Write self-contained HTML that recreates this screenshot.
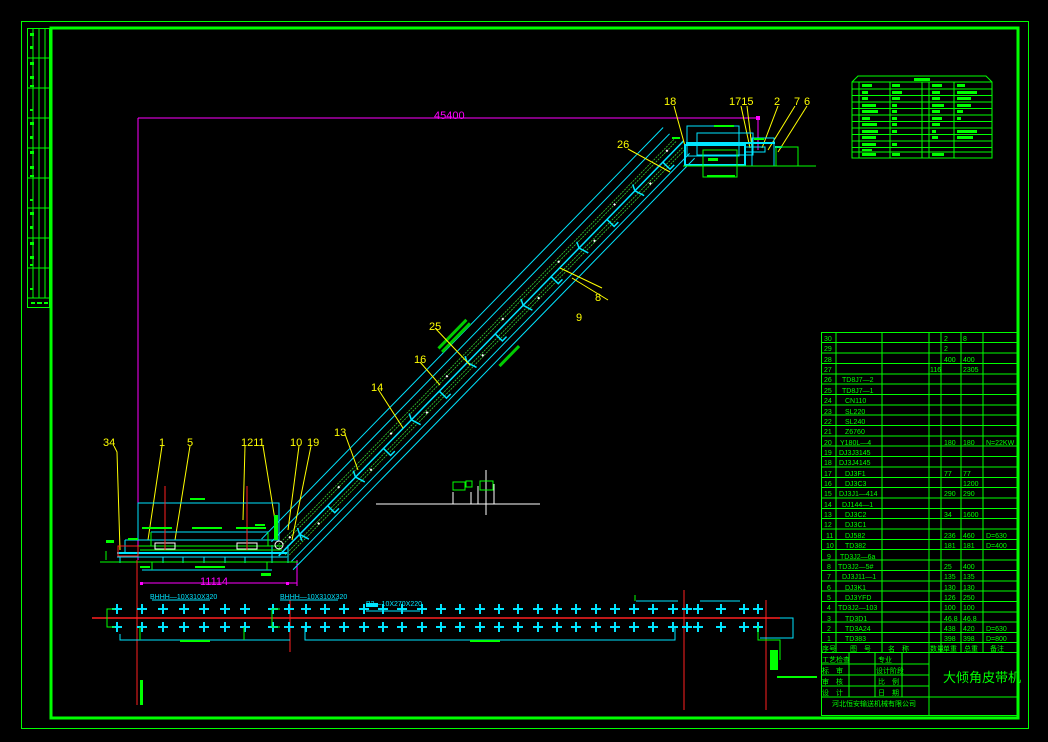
<!DOCTYPE html>
<html><head><meta charset="utf-8"><style>
html,body{margin:0;padding:0;background:#000;}
svg{display:block}
text{font-family:"Liberation Sans","Noto Sans CJK SC",sans-serif}
</style></head><body>
<svg width="1048" height="742" viewBox="0 0 1048 742" xmlns="http://www.w3.org/2000/svg">
<rect width="1048" height="742" fill="#000"/>
<rect x="21.5" y="21.5" width="1007" height="707" fill="none" stroke="#00ff00" stroke-width="1"/>
<rect x="51" y="28" width="967" height="690" fill="none" stroke="#00ff00" stroke-width="3"/>
<g stroke="#00ff00" fill="none" stroke-width="1">
<rect x="27.5" y="28.5" width="22" height="279"/>
<line x1="33" y1="28" x2="33" y2="298"/><line x1="39" y1="28" x2="39" y2="298"/><line x1="45" y1="28" x2="45" y2="298"/>
<line x1="27" y1="58" x2="50" y2="58"/><line x1="27" y1="88" x2="50" y2="88"/><line x1="27" y1="118" x2="50" y2="118"/><line x1="27" y1="148" x2="50" y2="148"/><line x1="27" y1="178" x2="50" y2="178"/><line x1="27" y1="208" x2="50" y2="208"/><line x1="27" y1="238" x2="50" y2="238"/><line x1="27" y1="268" x2="50" y2="268"/><line x1="27" y1="298" x2="50" y2="298"/>
</g>
<g fill="#00ff00">
<rect x="30" y="33" width="4" height="3"/><rect x="30" y="46" width="3" height="3"/><rect x="30" y="62" width="4" height="3"/><rect x="30" y="76" width="4" height="3"/><rect x="30" y="85" width="4" height="2"/><rect x="30" y="109" width="3" height="2"/><rect x="30" y="122" width="4" height="3"/><rect x="30" y="136" width="3" height="3"/><rect x="30" y="151" width="4" height="3"/><rect x="30" y="166" width="4" height="3"/><rect x="30" y="175" width="4" height="2"/><rect x="30" y="199" width="3" height="2"/><rect x="30" y="212" width="4" height="3"/><rect x="30" y="226" width="3" height="3"/><rect x="30" y="242" width="4" height="3"/><rect x="30" y="256" width="4" height="3"/><rect x="30" y="264" width="3" height="2"/><rect x="30" y="288" width="3" height="2"/><rect x="31" y="302" width="4" height="2"/><rect x="37" y="302" width="5" height="2"/><rect x="44" y="302" width="4" height="2"/>
</g>

<g stroke="#ff00ff" stroke-width="1" fill="none">
<line x1="138" y1="118" x2="758" y2="118"/>
<line x1="138" y1="118" x2="138" y2="560"/>
<line x1="758" y1="118" x2="758" y2="150"/>
<line x1="142" y1="583" x2="297" y2="583"/>
<line x1="297" y1="560" x2="297" y2="586"/>
</g>
<rect x="756" y="116" width="4" height="4" fill="#ff00ff"/>
<rect x="140" y="582" width="3" height="3" fill="#ff00ff"/><rect x="286" y="582" width="3" height="3" fill="#ff00ff"/>
<text x="434" y="119" fill="#ff00ff" font-size="11">45400</text>
<text x="200" y="585" fill="#ff00ff" font-size="11">11114</text>

<g transform="translate(283,560) rotate(-45.7)">
<g stroke="#00e5ff" stroke-width="1" fill="none">
<line x1="0" y1="-30" x2="575" y2="-30"/>
<line x1="5" y1="-21" x2="575" y2="-21"/>
<line x1="5" y1="7" x2="575" y2="7"/>
<line x1="0" y1="14" x2="575" y2="14"/>
<line x1="0" y1="-6" x2="580" y2="-6" stroke-width="1.5"/>
</g>
<g stroke="#33cc33" stroke-width="0.8" fill="none" stroke-dasharray="2,1">
<line x1="5" y1="-14" x2="575" y2="-14"/><line x1="5" y1="-11" x2="575" y2="-11"/><line x1="5" y1="-2" x2="575" y2="-2"/><line x1="5" y1="1" x2="575" y2="1"/>
</g>
<g stroke="#00e5ff" stroke-width="1.5" fill="none">
<path d="M30,-6 l3,-6 M30,-6 l-3,6 M30,-6 l3,10"/>
<path d="M70,-6 l0,10 l6,0"/><path d="M110,-6 l3,-6 M110,-6 l3,10"/><path d="M150,-6 l0,10 l6,0"/><path d="M190,-6 l3,-6 M190,-6 l3,10"/><path d="M230,-6 l0,10 l6,0"/><path d="M270,-6 l3,-6 M270,-6 l3,10"/><path d="M310,-6 l0,10 l6,0"/><path d="M350,-6 l3,-6 M350,-6 l3,10"/><path d="M390,-6 l0,10 l6,0"/><path d="M430,-6 l3,-6 M430,-6 l3,10"/><path d="M470,-6 l0,10 l6,0"/><path d="M510,-6 l3,-6 M510,-6 l3,10"/><path d="M550,-6 l0,10 l6,0"/>
</g>
<g fill="#fff">
<rect x="20" y="-12" width="2" height="2"/><rect x="50" y="-1" width="2" height="2"/><rect x="90" y="-12" width="2" height="2"/><rect x="125" y="-1" width="2" height="2"/><rect x="165" y="-12" width="2" height="2"/><rect x="205" y="-1" width="2" height="2"/><rect x="245" y="-12" width="2" height="2"/><rect x="285" y="-1" width="2" height="2"/><rect x="325" y="-12" width="2" height="2"/><rect x="365" y="-1" width="2" height="2"/><rect x="405" y="-12" width="2" height="2"/><rect x="445" y="-1" width="2" height="2"/><rect x="485" y="-12" width="2" height="2"/><rect x="525" y="-1" width="2" height="2"/><rect x="560" y="-12" width="2" height="2"/>
</g>
<g fill="#00cc00"><rect x="260" y="-38" width="40" height="3"/><rect x="260" y="-33" width="40" height="3"/><rect x="290" y="18" width="28" height="3"/></g>
</g>

<g stroke="#ffff00" stroke-width="1" fill="none">
<path d="M114,446 L117,452 L120,550"/>
<path d="M162,446 L148,540"/><path d="M190,446 L175,540"/>
<path d="M245,446 L243,520"/><path d="M263,446 L275,520"/>
<path d="M299,446 L288,530"/><path d="M311,446 L292,540"/>
<path d="M345,434 L358,470"/><path d="M378,389 L403,428"/><path d="M420,362 L440,385"/><path d="M435,328 L470,365"/>
<path d="M602,288 L560,268"/><path d="M608,300 L572,278"/>
<path d="M674,106 L685,146"/><path d="M741,106 L750,148"/><path d="M747,106 L752,148"/><path d="M778,106 L762,148"/><path d="M795,106 L768,150"/><path d="M807,106 L778,152"/>
<path d="M628,149 L670,172"/>
</g>
<g fill="#ffff00" font-size="11">
<text x="103" y="446">34</text><text x="159" y="446">1</text><text x="187" y="446">5</text><text x="241" y="446">1211</text><text x="290" y="446">10</text><text x="307" y="446">19</text>
<text x="334" y="436">13</text><text x="371" y="391">14</text><text x="414" y="363">16</text><text x="429" y="330">25</text>
<text x="595" y="301">8</text><text x="576" y="321">9</text>
<text x="617" y="148">26</text><text x="664" y="105">18</text><text x="729" y="105">1715</text><text x="774" y="105">2</text><text x="794" y="105">7</text><text x="804" y="105">6</text>
</g>

<g stroke="#00e5ff" stroke-width="1" fill="none">
<rect x="138" y="503" width="141" height="37"/>
<line x1="151" y1="532" x2="268" y2="532"/>
<line x1="142" y1="570" x2="272" y2="570"/>
<line x1="117" y1="553" x2="287" y2="553" stroke-width="2"/>
<line x1="117" y1="557" x2="287" y2="557"/>
<line x1="120" y1="557" x2="120" y2="563"/><line x1="163" y1="557" x2="163" y2="563"/><line x1="183" y1="557" x2="183" y2="563"/><line x1="204" y1="557" x2="204" y2="563"/><line x1="225" y1="557" x2="225" y2="563"/><line x1="245" y1="557" x2="245" y2="563"/><line x1="272" y1="545" x2="272" y2="563"/><line x1="288" y1="545" x2="288" y2="563"/>
<line x1="125" y1="540" x2="148" y2="540"/><line x1="125" y1="540" x2="125" y2="552"/>
</g>
<g stroke="#00ff00" stroke-width="1" fill="none">
<line x1="100" y1="562" x2="298" y2="562"/>
<line x1="138" y1="546" x2="282" y2="546"/><line x1="140" y1="550" x2="282" y2="550"/>
<line x1="151" y1="532" x2="151" y2="546"/><line x1="268" y1="532" x2="268" y2="546"/>
<line x1="152" y1="562" x2="152" y2="570"/><line x1="267" y1="562" x2="267" y2="570"/>
<line x1="106" y1="551" x2="106" y2="560"/>
</g>
<g stroke="#fff" fill="none" stroke-width="1"><rect x="155" y="543" width="20" height="6"/><rect x="237" y="543" width="20" height="6"/><circle cx="279" cy="545" r="4"/></g>
<rect x="118" y="546" width="20" height="10" fill="none" stroke="#ff2020"/>
<g stroke="#ff2020" stroke-width="1"><line x1="165" y1="486" x2="165" y2="550"/><line x1="247" y1="486" x2="247" y2="550"/><line x1="137" y1="560" x2="137" y2="705"/><line x1="290" y1="600" x2="290" y2="652"/><line x1="684" y1="590" x2="684" y2="710"/><line x1="766" y1="600" x2="766" y2="710"/></g>
<g fill="#00ff00"><rect x="106" y="540" width="8" height="3"/><rect x="128" y="538" width="10" height="2"/><rect x="190" y="498" width="15" height="2"/><rect x="255" y="524" width="10" height="2"/><rect x="261" y="573" width="10" height="3"/><rect x="142" y="527" width="30" height="2"/><rect x="192" y="527" width="30" height="2"/><rect x="236" y="527" width="30" height="2"/><rect x="140" y="566" width="10" height="2"/><rect x="195" y="566" width="30" height="2"/><rect x="274" y="515" width="4" height="25"/></g>

<g stroke="#fff" stroke-width="1" fill="none">
<line x1="376" y1="504" x2="540" y2="504"/><line x1="486" y1="470" x2="486" y2="515"/>
<line x1="453" y1="492" x2="453" y2="504"/><line x1="471" y1="492" x2="471" y2="504"/><line x1="478" y1="486" x2="478" y2="504"/><line x1="494" y1="484" x2="494" y2="504"/>
</g>
<g stroke="#00ff00" fill="none"><rect x="453" y="482" width="12" height="8"/><rect x="466" y="481" width="6" height="6"/><rect x="480" y="481" width="13" height="9"/></g>

<g stroke="#00e5ff" stroke-width="1" fill="none">
<rect x="687" y="126" width="52" height="30"/>
<rect x="697" y="133" width="56" height="22"/>
<rect x="685" y="145" width="60" height="20" stroke-width="2"/>
<line x1="686" y1="143" x2="775" y2="143" stroke-width="2"/>
<rect x="752" y="138" width="22" height="28"/>
<rect x="745" y="147" width="20" height="5"/>
<line x1="775" y1="147" x2="782" y2="147" stroke-width="2"/>
</g>
<g stroke="#00ff00" stroke-width="1" fill="none">
<line x1="683" y1="166" x2="816" y2="166"/>
<rect x="703" y="150" width="34" height="27"/>
<rect x="776" y="147" width="22" height="19"/>
</g>
<g fill="#00ff00"><rect x="714" y="125" width="20" height="2"/><rect x="754" y="138" width="10" height="2"/><rect x="708" y="158" width="10" height="3"/><rect x="707" y="175" width="28" height="2"/><rect x="672" y="137" width="8" height="2"/></g>

<line x1="92" y1="618" x2="780" y2="618" stroke="#ff2020" stroke-width="1.5"/>
<g stroke="#00e5ff" stroke-width="1" fill="none">
<polyline points="120,634 120,640 290,640"/>
<polyline points="305,626 305,640 675,640 675,626"/>
<line x1="152" y1="600" x2="210" y2="600"/><line x1="280" y1="600" x2="338" y2="600"/><line x1="366" y1="611" x2="420" y2="611"/>
<line x1="636" y1="601" x2="678" y2="601"/><line x1="700" y1="601" x2="740" y2="601"/>
<polyline points="780,618 793,618 793,638 760,638"/>
</g>
<g fill="#00e5ff">
<path d="M116 604h2v10h-2zM112 608h10v2h-10z M141 604h2v10h-2zM137 608h10v2h-10z M162 604h2v10h-2zM158 608h10v2h-10z M183 604h2v10h-2zM179 608h10v2h-10z M203 604h2v10h-2zM199 608h10v2h-10z M224 604h2v10h-2zM220 608h10v2h-10z M244 604h2v10h-2zM240 608h10v2h-10z M272 604h2v10h-2zM268 608h10v2h-10z M288 604h2v10h-2zM284 608h10v2h-10z M305 604h2v10h-2zM301 608h10v2h-10z M324 604h2v10h-2zM320 608h10v2h-10z M343 604h2v10h-2zM339 608h10v2h-10z M363 604h2v10h-2zM359 608h10v2h-10z M382 604h2v10h-2zM378 608h10v2h-10z M401 604h2v10h-2zM397 608h10v2h-10z M421 604h2v10h-2zM417 608h10v2h-10z M440 604h2v10h-2zM436 608h10v2h-10z M459 604h2v10h-2zM455 608h10v2h-10z M479 604h2v10h-2zM475 608h10v2h-10z M498 604h2v10h-2zM494 608h10v2h-10z M517 604h2v10h-2zM513 608h10v2h-10z M537 604h2v10h-2zM533 608h10v2h-10z M556 604h2v10h-2zM552 608h10v2h-10z M575 604h2v10h-2zM571 608h10v2h-10z M595 604h2v10h-2zM591 608h10v2h-10z M614 604h2v10h-2zM610 608h10v2h-10z M633 604h2v10h-2zM629 608h10v2h-10z M652 604h2v10h-2zM648 608h10v2h-10z M672 604h2v10h-2zM668 608h10v2h-10z M686 604h2v10h-2zM682 608h10v2h-10z M697 604h2v10h-2zM693 608h10v2h-10z M720 604h2v10h-2zM716 608h10v2h-10z M743 604h2v10h-2zM739 608h10v2h-10z M757 604h2v10h-2zM753 608h10v2h-10z"/>
<path d="M116 622h2v10h-2zM112 626h10v2h-10z M141 622h2v10h-2zM137 626h10v2h-10z M162 622h2v10h-2zM158 626h10v2h-10z M183 622h2v10h-2zM179 626h10v2h-10z M203 622h2v10h-2zM199 626h10v2h-10z M224 622h2v10h-2zM220 626h10v2h-10z M244 622h2v10h-2zM240 626h10v2h-10z M272 622h2v10h-2zM268 626h10v2h-10z M288 622h2v10h-2zM284 626h10v2h-10z M305 622h2v10h-2zM301 626h10v2h-10z M324 622h2v10h-2zM320 626h10v2h-10z M343 622h2v10h-2zM339 626h10v2h-10z M363 622h2v10h-2zM359 626h10v2h-10z M382 622h2v10h-2zM378 626h10v2h-10z M401 622h2v10h-2zM397 626h10v2h-10z M421 622h2v10h-2zM417 626h10v2h-10z M440 622h2v10h-2zM436 626h10v2h-10z M459 622h2v10h-2zM455 626h10v2h-10z M479 622h2v10h-2zM475 626h10v2h-10z M498 622h2v10h-2zM494 626h10v2h-10z M517 622h2v10h-2zM513 626h10v2h-10z M537 622h2v10h-2zM533 626h10v2h-10z M556 622h2v10h-2zM552 626h10v2h-10z M575 622h2v10h-2zM571 626h10v2h-10z M595 622h2v10h-2zM591 626h10v2h-10z M614 622h2v10h-2zM610 626h10v2h-10z M633 622h2v10h-2zM629 626h10v2h-10z M652 622h2v10h-2zM648 626h10v2h-10z M672 622h2v10h-2zM668 626h10v2h-10z M686 622h2v10h-2zM682 626h10v2h-10z M697 622h2v10h-2zM693 626h10v2h-10z M720 622h2v10h-2zM716 626h10v2h-10z M743 622h2v10h-2zM739 626h10v2h-10z M757 622h2v10h-2zM753 626h10v2h-10z"/>
<rect x="366" y="603" width="12" height="4"/>
</g>
<g stroke="#00ff00" fill="none"><polyline points="115,609 107,609 107,627 115,627"/><polyline points="280,609 272,609 272,627 280,627"/><polyline points="758,626 758,640 780,640 780,660"/><line x1="140" y1="627" x2="140" y2="640"/><line x1="244" y1="627" x2="244" y2="640"/><line x1="635" y1="601" x2="635" y2="595"/></g>
<g fill="#00ff00"><rect x="140" y="680" width="3" height="25"/><rect x="180" y="640" width="30" height="2"/><rect x="470" y="640" width="30" height="2"/><rect x="777" y="676" width="40" height="2"/><rect x="770" y="650" width="8" height="20"/></g>
<g fill="#00e5ff" font-size="7"><text x="150" y="599">BHHH—10X310X320</text><text x="280" y="599">BHHH—10X310X320</text><text x="366" y="606">B2—10X270X220</text></g>

<g stroke="#00ff00" stroke-width="1" fill="none">
<path d="M852,158 V82 L858,76 H986 L992,82 V158 Z"/>
<line x1="852" y1="82" x2="992" y2="82"/>
<line x1="852" y1="89" x2="992" y2="89"/><line x1="852" y1="95.5" x2="992" y2="95.5"/><line x1="852" y1="102" x2="992" y2="102"/><line x1="852" y1="108.5" x2="992" y2="108.5"/><line x1="852" y1="115" x2="992" y2="115"/><line x1="852" y1="121.5" x2="992" y2="121.5"/><line x1="852" y1="128" x2="992" y2="128"/><line x1="852" y1="134.5" x2="992" y2="134.5"/><line x1="852" y1="141" x2="992" y2="141"/><line x1="852" y1="147.5" x2="992" y2="147.5"/><line x1="852" y1="152" x2="992" y2="152"/>
<line x1="859" y1="82" x2="859" y2="158"/><line x1="890" y1="82" x2="890" y2="158"/><line x1="922" y1="82" x2="922" y2="158"/><line x1="929" y1="82" x2="929" y2="158"/><line x1="954" y1="82" x2="954" y2="158"/>
</g>
<g fill="#00ff00">
<rect x="914" y="78" width="16" height="3"/>
<rect x="862" y="84" width="10" height="3"/><rect x="862" y="91" width="6" height="3"/><rect x="862" y="97" width="6" height="3"/><rect x="862" y="104" width="14" height="3"/><rect x="862" y="110" width="16" height="3"/><rect x="862" y="117" width="8" height="3"/><rect x="862" y="123" width="15" height="3"/><rect x="862" y="130" width="16" height="3"/><rect x="862" y="136" width="14" height="3"/><rect x="862" y="143" width="14" height="3"/><rect x="862" y="149" width="10" height="2"/><rect x="862" y="153" width="14" height="3"/>
<rect x="892" y="84" width="8" height="3"/><rect x="892" y="91" width="10" height="3"/><rect x="892" y="97" width="8" height="3"/><rect x="892" y="104" width="5" height="3"/><rect x="892" y="110" width="5" height="3"/><rect x="892" y="117" width="5" height="3"/><rect x="892" y="123" width="5" height="3"/><rect x="892" y="130" width="5" height="3"/><rect x="892" y="143" width="5" height="3"/><rect x="892" y="153" width="8" height="3"/>
<rect x="932" y="84" width="10" height="3"/><rect x="932" y="91" width="8" height="3"/><rect x="932" y="97" width="8" height="3"/><rect x="932" y="104" width="12" height="3"/><rect x="932" y="110" width="8" height="3"/><rect x="932" y="117" width="10" height="3"/><rect x="932" y="123" width="8" height="3"/><rect x="932" y="130" width="4" height="3"/><rect x="932" y="136" width="6" height="3"/><rect x="932" y="153" width="12" height="3"/>
<rect x="957" y="84" width="8" height="3"/><rect x="957" y="91" width="20" height="3"/><rect x="957" y="97" width="14" height="3"/><rect x="957" y="104" width="14" height="3"/><rect x="957" y="110" width="6" height="3"/><rect x="957" y="117" width="4" height="3"/><rect x="957" y="130" width="20" height="3"/><rect x="957" y="136" width="16" height="3"/>
</g>

<g stroke="#00ff00" stroke-width="1" fill="none">
<rect x="821.5" y="332.5" width="196" height="383"/>
<line x1="836" y1="332" x2="836" y2="652"/><line x1="882" y1="332" x2="882" y2="652"/><line x1="929" y1="332" x2="929" y2="715"/><line x1="941" y1="332" x2="941" y2="652"/><line x1="961" y1="332" x2="961" y2="652"/><line x1="983" y1="332" x2="983" y2="652"/>
<path d="M821 342.5h197M821 353h197M821 363.5h197M821 374h197M821 384h197M821 394.5h197M821 405h197M821 415h197M821 425.5h197M821 436h197M821 446h197M821 456.5h197M821 467h197M821 477.5h197M821 487.5h197M821 498h197M821 508.5h197M821 518.5h197M821 529h197M821 539.5h197M821 549.5h197M821 560h197M821 570.5h197M821 581h197M821 591h197M821 601.5h197M821 612h197M821 622h197M821 632.5h197M821 642.5h197M821 652.5h197"/>
<path d="M821 664h108M821 675h108M821 686h108M821 697h197"/>
<line x1="849" y1="652" x2="849" y2="697"/><line x1="875" y1="652" x2="875" y2="697"/><line x1="902" y1="652" x2="902" y2="697"/>
</g>
<g fill="#00ff00" font-size="7">
<text x="824" y="341">30</text><text x="824" y="351">29</text><text x="824" y="362">28</text><text x="824" y="372">27</text><text x="824" y="382">26</text><text x="824" y="393">25</text><text x="824" y="403">24</text><text x="824" y="414">23</text><text x="824" y="424">22</text><text x="824" y="434">21</text><text x="824" y="445">20</text><text x="824" y="455">19</text><text x="824" y="465">18</text><text x="824" y="476">17</text><text x="824" y="486">16</text><text x="824" y="496">15</text><text x="824" y="507">14</text><text x="824" y="517">13</text><text x="824" y="527">12</text><text x="826" y="538">11</text><text x="826" y="548">10</text><text x="827" y="559">9</text><text x="827" y="569">8</text><text x="827" y="579">7</text><text x="827" y="590">6</text><text x="827" y="600">5</text><text x="827" y="610">4</text><text x="827" y="621">3</text><text x="827" y="631">2</text><text x="827" y="641">1</text>
<text x="842" y="382">TD8J7—2</text><text x="842" y="393">TD8J7—1</text><text x="845" y="403">CN110</text><text x="845" y="414">SL220</text><text x="845" y="424">SL240</text><text x="845" y="434">Z6760</text><text x="840" y="445">Y180L—4</text><text x="839" y="455">DJ3J3145</text><text x="839" y="465">DJ3J4145</text><text x="845" y="476">DJ3F1</text><text x="845" y="486">DJ3C3</text><text x="839" y="496">DJ3J1—414</text><text x="842" y="507">DJ144—1</text><text x="845" y="517">DJ3C2</text><text x="845" y="527">DJ3C1</text><text x="845" y="538">DJ582</text><text x="845" y="548">TD382</text><text x="840" y="559">TD3J2—6a</text><text x="838" y="569">TD3J2—5#</text><text x="842" y="579">DJ3J11—1</text><text x="845" y="590">DJ3K1</text><text x="845" y="600">DJ3YFD</text><text x="838" y="610">TD3J2—103</text><text x="845" y="621">TD3D1</text><text x="845" y="631">TD3A24</text><text x="845" y="641">TD383</text>
<text x="944" y="341">2</text><text x="963" y="341">8</text><text x="944" y="351">2</text><text x="944" y="362">400</text><text x="963" y="362">400</text><text x="930" y="372">116</text><text x="963" y="372">2305</text><text x="944" y="445">180</text><text x="963" y="445">180</text><text x="986" y="445">N=22KW</text><text x="944" y="476">77</text><text x="963" y="476">77</text><text x="963" y="486">1200</text><text x="944" y="496">290</text><text x="963" y="496">290</text><text x="944" y="517">34</text><text x="963" y="517">1600</text><text x="944" y="538">236</text><text x="963" y="538">460</text><text x="986" y="538">D=630</text><text x="944" y="548">181</text><text x="963" y="548">181</text><text x="986" y="548">D=400</text><text x="944" y="569">25</text><text x="963" y="569">400</text><text x="944" y="579">135</text><text x="963" y="579">135</text><text x="944" y="590">130</text><text x="963" y="590">130</text><text x="944" y="600">126</text><text x="963" y="600">250</text><text x="944" y="610">100</text><text x="963" y="610">100</text><text x="944" y="621">46.8</text><text x="963" y="621">46.8</text><text x="944" y="631">438</text><text x="963" y="631">420</text><text x="986" y="631">D=630</text><text x="944" y="641">398</text><text x="963" y="641">398</text><text x="986" y="641">D=800</text>
<text x="822" y="651">序号</text><text x="850" y="651">图　号</text><text x="888" y="651">名　称</text><text x="930" y="651">数量</text><text x="943" y="651">单重</text><text x="964" y="651">总重</text><text x="990" y="651">备注</text>
<text x="822" y="662">工艺检查</text><text x="878" y="662">专业</text><text x="822" y="673">标　审</text><text x="876" y="673">设计阶段</text><text x="822" y="684">审　核</text><text x="878" y="684">比　例</text><text x="822" y="695">设　计</text><text x="878" y="695">日　期</text>
<text x="832" y="706">河北恒安输送机械有限公司</text>
</g>
<text x="943" y="682" fill="#00ff00" font-size="13">大倾角皮带机</text>
</svg>
</body></html>
